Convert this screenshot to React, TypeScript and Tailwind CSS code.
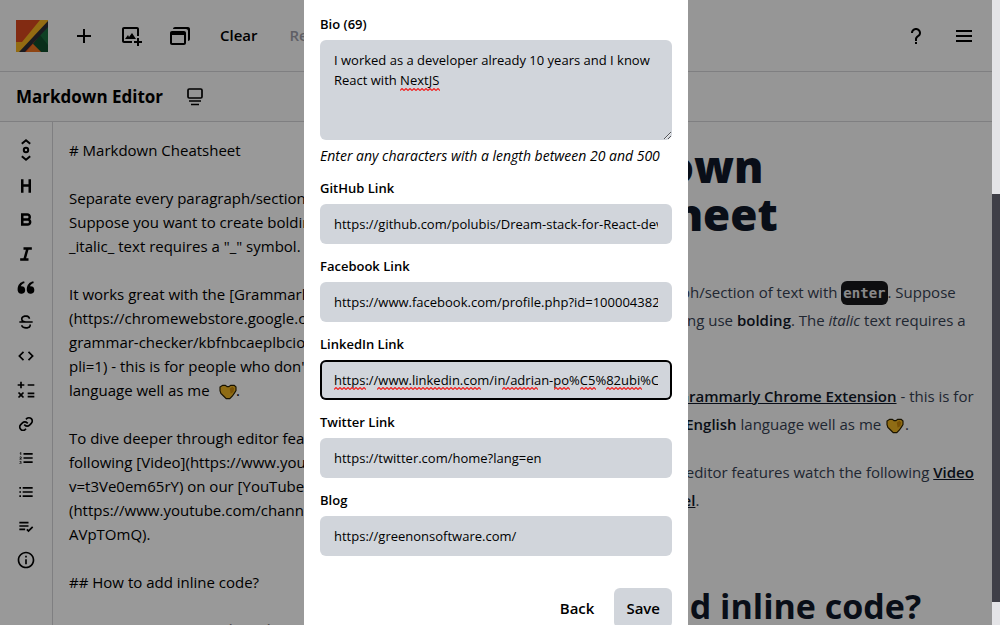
import React from "react";
import { BiPlus, BiImageAdd, BiWindows, BiQuestionMark, BiMenu, BiHeading, BiBold, BiItalic, BiSolidQuoteAltLeft, BiStrikethrough, BiCode, BiMath, BiLink, BiListOl, BiListUl, BiListCheck, BiInfoCircle } from "react-icons/bi";

const EDITOR_TEXT = `# Markdown Cheatsheet

Separate every paragraph/section of text with
Suppose you want to create bolding use **bolding**
_italic_ text requires a "_" symbol.

It works great with the [Grammarly Chrome
(https://chromewebstore.google.com/detail
grammar-checker/kbfnbcaeplbcioakkpcpgfkob
pli=1) - this is for people who don't know **English**
language well as me \u2003\u2002.

To dive deeper through editor features watch the
following [Video](https://www.youtube.com/watch?
v=t3Ve0em65rY) on our [YouTube Channel]
(https://www.youtube.com/channel/UCg3avsG
AVpTOmQ).

## How to add inline code?

To add inline code use \`code\` quotes.`;

function ScrollSyncIcon() {
  return (
    <svg viewBox="0 0 24 24" className="size-6" fill="none" stroke="currentColor" strokeWidth="2" aria-hidden="true">
      <path d="M7.800 5.700 12 2.200l4.200 3.500M7.800 18.300 12 21.800l4.200-3.500" />
      <circle cx="12" cy="12" r="2.2" />
    </svg>
  );
}

function DisplayIcon() {
  return (
    <svg viewBox="0 0 24 24" className="size-6" fill="none" stroke="currentColor" strokeWidth="1.7" aria-hidden="true">
      <rect x="5" y="4" width="14" height="9" rx="1.2" />
      <path d="M6 16h12M8 19.500h8" />
    </svg>
  );
}

function Heart() {
  return (
    <svg viewBox="0 0 20 18" className="inline-block h-4 w-5 align-middle" aria-hidden="true">
      <path d="M4 1.500h3l2 1.500h2l2-1.500h4l2 2v4l-2 3-2 3-3 3h-4l-3-3-3-3-1-3v-4z" fill="#eeb422" stroke="#2b2000" strokeWidth="1.300" />
      <path d="M12 5 15 3l2 2-1 4-3 2z" fill="#c9870a" />
    </svg>
  );
}

function Logo() {
  return (
    <svg viewBox="0 0 32 32" className="size-8" aria-hidden="true">
      <path fill="#d9481f" d="M0 0h32v32H0z" />
      <path fill="#1a6b3c" d="M32 4v28h-7L17 24z" />
      <path fill="#104d2c" d="m24 15 8 10v7h-7l-8-8z" />
      <path fill="#f6b21e" d="M24 0h8v3L6 32H0V22h6z" />
      <path fill="#2c2c34" d="M32 1v6L9 32H3z" />
      <path fill="#ee7420" d="m17 24 8 8H10z" />
    </svg>
  );
}

const TOOLS = [
  { label: "Heading", Icon: BiHeading },
  { label: "Bold", Icon: BiBold },
  { label: "Italic", Icon: BiItalic },
  { label: "Quote", Icon: BiSolidQuoteAltLeft },
  { label: "Strikethrough", Icon: BiStrikethrough },
  { label: "Code", Icon: BiCode },
  { label: "Math", Icon: BiMath },
  { label: "Link", Icon: BiLink },
  { label: "Ordered list", Icon: BiListOl },
  { label: "Unordered list", Icon: BiListUl },
  { label: "Check list", Icon: BiListCheck },
  { label: "Info", Icon: BiInfoCircle },
];

function Squiggle({ className }: { className: string }) {
  const points = Array.from({ length: 60 }, (_, i) => `${i * 2},${i % 2 ? 0.5 : 2.5}`).join(" ");
  return (
    <svg className={`pointer-events-none absolute h-[3px] ${className}`} aria-hidden="true">
      <polyline points={points} fill="none" stroke="#f02828" strokeWidth="1.2" />
    </svg>
  );
}

const LABEL = "text-[13px] leading-5 font-semibold";
const CONTROL = "block w-full rounded-md bg-[#d1d5db] px-3.5 text-[13px] leading-5 text-black outline-none";

type FieldProps = { id: string; label: string; value: string; focused?: boolean; children?: React.ReactNode };

function Field({ id, label, value, focused, children }: FieldProps) {
  return (
    <div className="flex flex-col gap-1.5">
      <label htmlFor={id} className={LABEL}>{label}</label>
      <div className="relative">
        <input id={id} defaultValue={value} spellCheck={false} className={`${CONTROL} h-10 ${focused ? "ring-2 ring-black ring-inset" : ""}`} />
        {children}
      </div>
    </div>
  );
}

function ProfileForm() {
  return (
    <form className="flex w-96 flex-col gap-3 bg-white px-4 pt-3.5">
      <div className="flex flex-col gap-1.5">
        <label htmlFor="bio" className={LABEL}>Bio (69)</label>
        <div className="relative">
          <textarea id="bio" spellCheck={false} className={`${CONTROL} h-[100px] py-2.5`} defaultValue={"I worked as a developer already 10 years and I know React with NextJS"} />
          <Squiggle className="top-12 left-20 w-10" />
        </div>
        <p className="text-[14px] leading-5 italic">Enter any characters with a length between 20 and 500</p>
      </div>
      <Field id="github" label="GitHub Link" value="https://github.com/polubis/Dream-stack-for-React-developers" />
      <Field id="facebook" label="Facebook Link" value="https://www.facebook.com/profile.php?id=100004382941" />
      <Field id="linkedin" label="LinkedIn Link" value="https://www.linkedin.com/in/adrian-po%C5%82ubi%C5%84ski" focused>
        <Squiggle className="top-[27px] left-3.5 w-8" />
        <Squiggle className="top-[27px] left-[57px] w-[104px]" />
        <Squiggle className="top-[27px] left-[182px] w-9" />
        <Squiggle className="top-[27px] left-[234px] w-4" />
        <Squiggle className="top-[27px] left-[260px] w-4" />
        <Squiggle className="top-[27px] left-[286px] w-9" />
      </Field>
      <Field id="twitter" label="Twitter Link" value="https://twitter.com/home?lang=en" />
      <Field id="blog" label="Blog" value="https://greenonsoftware.com/" />
      <div className="mt-5 flex justify-end gap-2 text-[15px] leading-6 font-semibold">
        <button type="button" className="h-10 rounded-md px-3">Back</button>
        <button type="button" className="h-10 rounded-md bg-[#d1d5db] px-3">Save</button>
      </div>
    </form>
  );
}

function Preview() {
  return (
    <article className="flex min-w-0 flex-1 flex-col gap-5 bg-zinc-50 pt-5 pl-11 text-[15px] leading-7 whitespace-nowrap text-gray-700">
      <h2 className="mb-5 text-[44px] leading-12 font-extrabold text-gray-900">Markdown<br />Cheatsheet</h2>
      <p>
        Separate every paragraph/section of text with{" "}
        <code className="rounded-md bg-zinc-900 px-0.5 py-1 font-['DejaVu_Sans_Mono',monospace] text-[14px] leading-5 font-bold text-zinc-200">enter</code>. Suppose<br />
        you want to create bolding use <strong className="font-semibold text-gray-900">bolding</strong>. The <em>italic</em> text requires a<br />
        "_" symbol.
      </p>
      <p>
        It works great with the <a href="#grammarly" className="font-semibold text-gray-900 underline">Grammarly Chrome Extension</a> - this is for<br />
        people who don't know <strong className="font-semibold text-gray-900">English</strong> language well as me <Heart />.
      </p>
      <p>
        To dive deeper through editor features watch the following <a href="#video" className="font-semibold text-gray-900 underline">Video</a><br />
        on our <a href="#channel" className="font-semibold text-gray-900 underline">YouTube Channel</a>.
      </p>
      <h3 className="mt-12 text-[34px] leading-12 font-bold text-gray-900">How to add inline code?</h3>
    </article>
  );
}

export default function App() {
  return (
    <div className="flex h-screen overflow-hidden font-['Open_Sans',sans-serif] text-black">
      <div className="relative flex min-w-0 flex-1 flex-col bg-zinc-50">
        <header className="flex h-[72px] shrink-0 items-center border-b border-zinc-300 px-4">
          <a href="#home" aria-label="Home"><Logo /></a>
          <nav className="ml-6 flex items-center gap-6 text-[15px] font-semibold">
            <button aria-label="New document"><BiPlus className="size-6" /></button>
            <button aria-label="Upload image"><BiImageAdd className="size-6" /></button>
            <button aria-label="Documents"><BiWindows className="size-6" /></button>
            <button className="ml-1">Clear</button>
            <button disabled className="ml-2 text-zinc-400">Reset</button>
          </nav>
          <div className="ml-auto flex gap-6">
            <button aria-label="Help"><BiQuestionMark className="size-6" /></button>
            <button aria-label="Menu"><BiMenu className="size-6" /></button>
          </div>
        </header>
        <div className="flex h-[50px] shrink-0 items-center gap-5 border-b border-zinc-300 px-4">
          <h1 className="text-[17px] font-bold">Markdown Editor</h1>
          <button aria-label="Change view"><DisplayIcon /></button>
        </div>
        <main className="flex min-h-0 flex-1 overflow-hidden">
          <div className="flex min-w-0 flex-1 bg-white">
            <div className="flex w-[53px] shrink-0 flex-col items-center gap-2.5 border-r border-zinc-300 pt-3.5">
              <button aria-label="Sync scroll" className="flex h-7 shrink-0 items-center"><ScrollSyncIcon /></button>
              {TOOLS.map(({ label, Icon }) => (
                <button key={label} aria-label={label} className="flex size-6 shrink-0 items-center justify-center"><Icon className="size-5" /></button>
              ))}
            </div>
            <div className="relative min-w-0 flex-1">
              <textarea aria-label="Markdown" spellCheck={false} wrap="off" className="block h-full w-full resize-none overflow-hidden p-4 text-[15px] leading-6 whitespace-pre outline-none" defaultValue={EDITOR_TEXT} />
              <span className="pointer-events-none absolute top-64 left-[165px]"><Heart /></span>
            </div>
          </div>
          <Preview />
        </main>
        <div className="absolute inset-0 flex items-start justify-center overflow-hidden bg-black/40">
          <ProfileForm />
        </div>
      </div>
      <div className="w-2 shrink-0 bg-zinc-200 pt-[194px]"><div className="h-[408px] bg-zinc-700" /></div>
    </div>
  );
}
